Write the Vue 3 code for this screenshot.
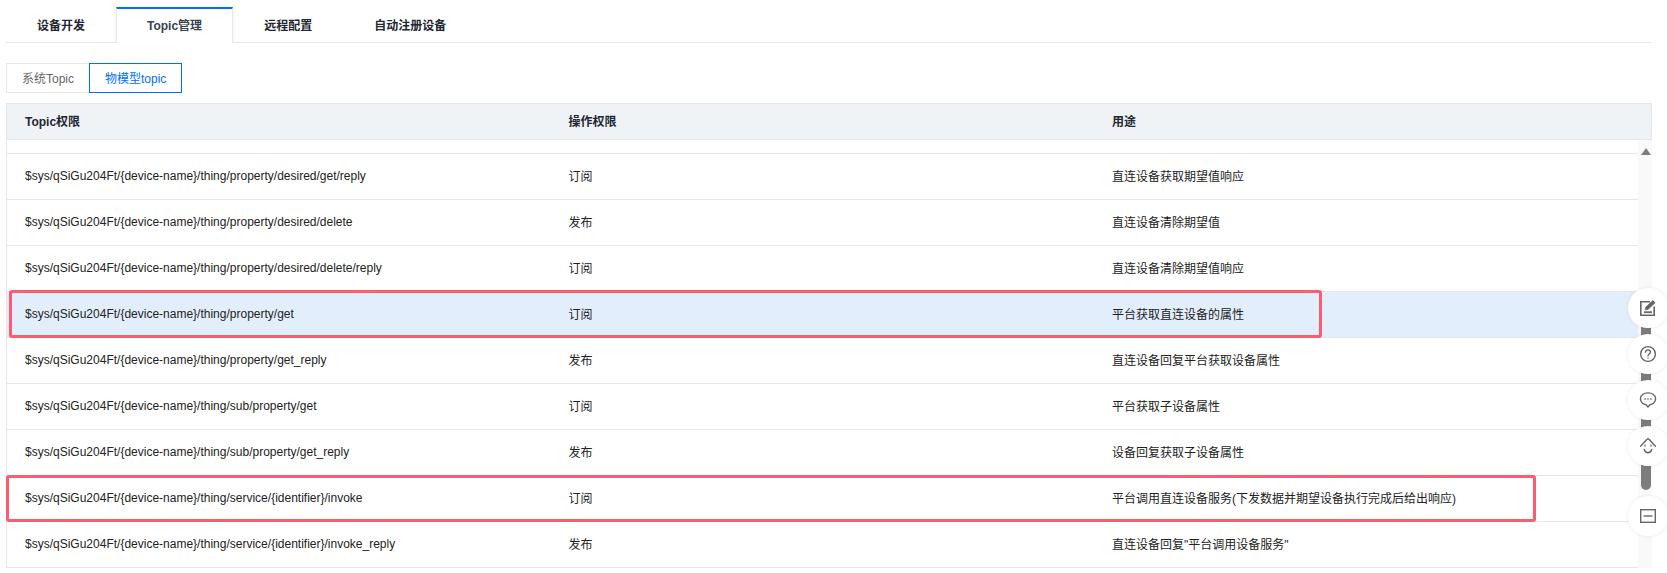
<template>
  <div class="page">
    <div class="tabs">
      <div
        v-for="(tab, i) in tabs"
        :key="tab"
        class="tab"
        :class="{ 'tab--active': i === 1 }"
      >{{ tab }}</div>
    </div>

    <div class="switch">
      <div class="switch__item">系统Topic</div>
      <div class="switch__item switch__item--active">物模型topic</div>
    </div>

    <div class="table">
      <div class="row row--head">
        <div class="cell">Topic权限</div>
        <div class="cell">操作权限</div>
        <div class="cell">用途</div>
      </div>
      <div class="table__body">
        <div class="rows">
          <div class="spacer"></div>
          <div
            v-for="row in rows"
            :key="row.topic"
            class="row"
            :class="{ 'row--hover': row.hover }"
          >
            <div class="cell">{{ row.topic }}</div>
            <div class="cell">{{ row.perm }}</div>
            <div class="cell">{{ row.use }}</div>
          </div>
        </div>
        <div class="scrollbar">
          <div class="scrollbar__arrow"></div>
          <div class="scrollbar__thumb"></div>
        </div>
      </div>
    </div>

    <div class="mark mark--one"></div>
    <div class="mark mark--two"></div>

    <div class="dock">
      <div class="dock__btn dock__btn--edit">
        <svg width="18" height="18" viewBox="0 0 18 18" fill="none" stroke="#666" stroke-width="1.6">
          <path d="M11 2.800H1.800v13.400h13.400V7.500" />
          <path d="M5 13.200h8" stroke-width="1.800" />
          <path d="M6.200 10.800l.7-2.700 7-6.600 2.200 2.200-7 6.600z" fill="#666" stroke-width="0.800" />
        </svg>
      </div>
      <div class="dock__btn dock__btn--help">
        <svg width="18" height="18" viewBox="0 0 18 18" fill="none" stroke="#666" stroke-width="1.400">
          <circle cx="9" cy="9" r="7.400" />
          <path d="M6.600 7.200C6.600 5.800 7.700 4.900 9 4.900s2.400.9 2.400 2.200c0 1.800-2.400 1.900-2.400 3.700" stroke-linecap="round" />
          <path d="M9 12.400v1.200" stroke-width="1.500" />
        </svg>
      </div>
      <div class="dock__btn dock__btn--chat">
        <svg width="18" height="18" viewBox="0 0 18 18" fill="none" stroke="#666" stroke-width="1.400">
          <path d="M9 1.900c4.400 0 7.600 2.400 7.600 5.900s-3.200 5.900-5.600 5.900L9 15.900l-2-2.200C4.600 13.700 1.400 11.300 1.400 7.800S4.600 1.900 9 1.900z" />
          <path d="M5.400 8h1.400M8.300 8h1.400M11.200 8h1.400" stroke-width="1.500" />
        </svg>
      </div>
      <div class="dock__btn dock__btn--bot">
        <svg width="18" height="18" viewBox="0 0 18 18" fill="none" stroke="#666" stroke-width="1.400">
          <path d="M1.600 9.200L8 2.200c.6-.6 1.400-.6 2 0l6.400 7" stroke-linecap="round" />
          <path d="M5.200 12.400c.8 2.200 2.200 3.400 3.800 3.400s3-1.200 3.800-3.400" stroke-linecap="round" />
          <path d="M6 7.800v1.600M12 7.800v1.600" />
        </svg>
      </div>
      <div class="dock__btn dock__btn--fold">
        <svg width="16" height="14" viewBox="0 0 16 14" fill="none" stroke="#666" stroke-width="1.400">
          <rect x="0.700" y="0.700" width="14.600" height="12.600" />
          <path d="M3.500 7h9" />
        </svg>
      </div>
    </div>
  </div>
</template>

<script setup>
const tabs = ['设备开发', 'Topic管理', '远程配置', '自动注册设备'];

const base = '$sys/qSiGu204Ft/{device-name}/thing/';

const rows = [
  { topic: base + 'property/desired/get/reply', perm: '订阅', use: '直连设备获取期望值响应' },
  { topic: base + 'property/desired/delete', perm: '发布', use: '直连设备清除期望值' },
  { topic: base + 'property/desired/delete/reply', perm: '订阅', use: '直连设备清除期望值响应' },
  { topic: base + 'property/get', perm: '订阅', use: '平台获取直连设备的属性', hover: true },
  { topic: base + 'property/get_reply', perm: '发布', use: '直连设备回复平台获取设备属性' },
  { topic: base + 'sub/property/get', perm: '订阅', use: '平台获取子设备属性' },
  { topic: base + 'sub/property/get_reply', perm: '发布', use: '设备回复获取子设备属性' },
  { topic: base + 'service/{identifier}/invoke', perm: '订阅', use: '平台调用直连设备服务(下发数据并期望设备执行完成后给出响应)' },
  { topic: base + 'service/{identifier}/invoke_reply', perm: '发布', use: '直连设备回复"平台调用设备服务"' },
];
</script>

<style>
html,
body {
  margin: 0;
  background: #fff;
  overflow: hidden;
}
</style>

<style scoped>
.page {
  position: relative;
  width: 1667px;
  height: 573px;
  overflow: hidden;
  padding: 7px 15px 0 6px;
  box-sizing: border-box;
  background: #fff;
  font-family: "Liberation Sans", "Noto Sans CJK SC", sans-serif;
  font-size: 12px;
  color: #333;
}

.tabs {
  display: flex;
  height: 36px;
  box-sizing: border-box;
  border-bottom: 1px solid #e4e7ec;
}

.tab {
  height: 36px;
  box-sizing: border-box;
  display: flex;
  align-items: center;
  padding: 0 31px 2px;
  font-weight: 700;
  color: #1f2733;
}

.tab--active {
  background: #fff;
  border-top: 2px solid #006eff;
  border-left: 1px solid #e4e7ec;
  border-right: 1px solid #e4e7ec;
  padding: 0 30px 4px;
  color: #3a4352;
  box-shadow: 0 0 4px rgba(0, 0, 0, 0.08);
  clip-path: inset(-4px -4px 0 -4px);
}

.switch {
  display: flex;
  margin-top: 20px;
}

.switch__item {
  height: 30px;
  box-sizing: border-box;
  display: flex;
  align-items: center;
  padding: 0 15px 2px;
  border: 1px solid #e4e7ec;
  border-right: none;
  color: #666;
}

.switch__item--active {
  border: 1px solid #006eff;
  color: #006eff;
}

.table {
  margin-top: 10px;
  border-left: 1px solid #e4e7ec;
  border-right: 1px solid #e4e7ec;
}

.row {
  display: flex;
  height: 46px;
  box-sizing: border-box;
  border-bottom: 1px solid #e4e7ec;
  color: #222;
}

.row--head {
  height: 37px;
  background: #f0f3f6;
  border-top: 1px solid #e4e7ec;
  font-weight: 700;
  color: #1f2733;
}

.row--hover {
  background: #e3eefc;
}

.cell {
  flex: 0 0 543.5px;
  width: 543.5px;
  box-sizing: border-box;
  padding: 0 0 2px 18px;
  display: flex;
  align-items: center;
  white-space: nowrap;
}

.table__body {
  display: flex;
}

.rows {
  width: 1631px;
  flex: none;
}

.spacer {
  height: 14px;
  box-sizing: border-box;
  border-bottom: 1px solid #e4e7ec;
}

.scrollbar {
  flex: 1;
  background: #f9f9f9;
  padding: 8px 1px 0 3px;
}

.scrollbar__arrow {
  width: 0;
  height: 0;
  border-left: 5px solid transparent;
  border-right: 5px solid transparent;
  border-bottom: 7px solid #7d7d7d;
}

.scrollbar__thumb {
  width: 10px;
  height: 164px;
  margin-top: 171px;
  background: #7d7d7d;
  border-radius: 0 0 5px 5px;
}

.mark {
  position: absolute;
  box-sizing: border-box;
  border: 3px solid #ff5a70;
  border-radius: 3px;
}

.mark--one {
  left: 9px;
  top: 290px;
  width: 1313px;
  height: 48px;
}

.mark--two {
  left: 6px;
  top: 475px;
  width: 1530px;
  height: 47px;
}

.dock__btn {
  position: absolute;
  left: 1628px;
  width: 40px;
  height: 40px;
  border-radius: 50%;
  background: #fff;
  box-shadow: 0 0 4px rgba(0, 0, 0, 0.08);
  display: flex;
  align-items: center;
  justify-content: center;
}

.dock__btn--edit { top: 288px; }
.dock__btn--help { top: 334px; }
.dock__btn--chat { top: 380px; }
.dock__btn--bot { top: 426px; }
.dock__btn--fold { top: 496px; }
</style>
